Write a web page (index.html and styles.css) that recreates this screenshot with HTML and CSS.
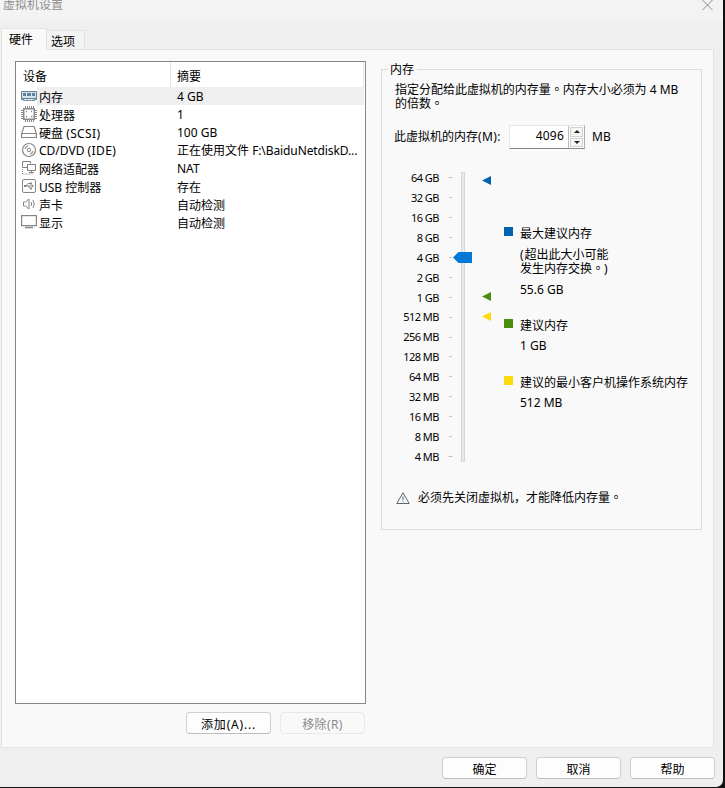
FILE: index.html
```html
<!DOCTYPE html>
<html lang="zh-CN">
<head>
<meta charset="utf-8">
<title>虚拟机设置</title>
<link rel="stylesheet" href="styles.css">
</head>
<body>
<div class="dialog">
  <header class="titlebar">
    <span class="title">虚拟机设置</span>
    <svg class="close" width="11" height="11" viewBox="0 0 11 11"><path d="M.5 0l10 10M10.500 0l-10 10" fill="none" stroke="#8a8a8a"/></svg>
  </header>
  <nav class="tabs">
    <div class="tab active">硬件</div>
    <div class="tab">选项</div>
  </nav>
  <main class="panel">
    <section class="left">
      <div class="list">
        <div class="list-head"><span class="c1">设备</span><span class="c2">摘要</span></div>
        <div class="row selected"><svg class="ico" width="16" height="16" viewBox="0 0 16 16"><path d="M.5 3.500h15v8h-2v1h-11v-1h-2z" fill="#d3e2eb" stroke="#638098"/><path d="M2 5h3v3H2zM6 5h4v3H6zM11 5h3v3h-3z" fill="#638098"/><path d="M1 10.500h14" stroke="#638098"/><path d="M4 12h1M7 12h1M10 12h1" stroke="#fff"/></svg><span class="name">内存</span><span class="sum">4 GB</span></div>
        <div class="row"><svg class="ico" width="16" height="16" viewBox="0 0 16 16" fill="none" stroke="#8b8b8b"><path d="M4.500 0v2M6.500 0v2M8.500 0v2M10.500 0v2M12.500 0v2M4.500 14v2M6.500 14v2M8.500 14v2M10.500 14v2M12.500 14v2M0 4.500h2M0 6.500h2M0 8.500h2M0 10.500h2M0 12.500h2M14 4.500h2M14 6.500h2M14 8.500h2M14 10.500h2M14 12.500h2"/><path d="M2.750 2.750h10.500v10.500H2.750z" stroke-width="1.500"/><path d="M5 5.500h1M10 5.500h1M5 10.500h1M10 10.500h1.500" stroke-width="1.500"/></svg><span class="name">处理器</span><span class="sum">1</span></div>
        <div class="row"><svg class="ico" width="16" height="16" viewBox="0 0 16 16" fill="none" stroke="#878787" stroke-width="1.200"><path d="M3 2.500h10l2.400 7v4H.6v-4zM.5 9.500h15"/></svg><span class="name">硬盘 <span class="wide">(SCSI)</span></span><span class="sum">100 GB</span></div>
        <div class="row"><svg class="ico" width="16" height="16" viewBox="0 0 16 16" fill="none" stroke="#858585"><circle cx="8" cy="8" r="6.500" stroke-width="1.200"/><circle cx="8" cy="8" r="1.700"/><path d="M4 7a4 4 0 0 1 3-3M12 9a4 4 0 0 1-3 3" stroke-width="1.600" stroke="#aaa"/></svg><span class="name latin">CD/DVD <span class="wide">(IDE)</span></span><span class="sum">正在使用文件 <span class="path">F:\BaiduNetdiskD...</span></span></div>
        <div class="row"><svg class="ico" width="16" height="16" viewBox="0 0 16 16" fill="none" stroke="#818181"><path d="M6 7.500H1.500v-6h8v2"/><path d="M6.500 4.500h8v6h-8zM8 12.500h5M10.500 10.500v2"/><path d="M1.500 9v5h10" stroke-dasharray="1 1"/></svg><span class="name">网络适配器</span><span class="sum">NAT</span></div>
        <div class="row"><svg class="ico" width="16" height="16" viewBox="0 0 16 16" fill="none" stroke="#858585"><rect x="1.500" y="1.500" width="13" height="13" rx="1.500"/><path d="M4 8h8M5 8l2-2.500h3M7 8l2 2.500h1.500"/><path d="M3 7h2v2H3zM9 4.500h2v2H9zM9 9.500h2v2H9zM11 6.500L13 8l-2 1.500z" fill="#858585" stroke="none"/></svg><span class="name">USB 控制器</span><span class="sum cjk">存在</span></div>
        <div class="row"><svg class="ico" width="16" height="16" viewBox="0 0 16 16" fill="none" stroke="#858585"><path d="M2.500 6h2L8 3v10L4.500 10h-2z"/><path d="M10 6q1.500 2 0 4M12 4q2.500 4 0 8"/></svg><span class="name cjk">声卡</span><span class="sum cjk">自动检测</span></div>
        <div class="row"><svg class="ico" width="16" height="16" viewBox="0 0 16 16" fill="none" stroke="#858585"><rect x=".6" y="1.600" width="14.800" height="10" stroke-width="1.200"/><path d="M4 13.500h8" stroke-width="1.500"/></svg><span class="name cjk">显示</span><span class="sum cjk">自动检测</span></div>
      </div>
      <div class="list-actions">
        <div class="btn add"><span class="wide">添加(A)...</span></div>
        <div class="btn disabled"><span class="wide">移除(R)</span></div>
      </div>
    </section>
    <fieldset class="group">
      <legend>内存</legend>
      <p class="desc">指定分配给此虚拟机的内存量<span class="stop" lang="zh-TW">。</span>内存大小必须为 4 MB<br>的倍数<span class="stop" lang="zh-TW">。</span></p>
      <div class="amount">
        <label>此虚拟机的内存<span class="wide">(M):</span></label>
        <div class="spin"><span class="value">4096</span><span class="arrows"><i class="up"></i><i class="down"></i></span></div>
        <span>MB</span>
      </div>
      <div class="mem">
        <div class="labels"><span>64 GB</span><span>32 GB</span><span>16 GB</span><span>8 GB</span><span>4 GB</span><span>2 GB</span><span>1 GB</span><span>512 MB</span><span>256 MB</span><span>128 MB</span><span>64 MB</span><span>32 MB</span><span>16 MB</span><span>8 MB</span><span>4 MB</span></div>
        <svg class="slider" width="48" height="292" viewBox="0 0 48 292">
          <path d="M.5 5.500h4M1 25.500h3M1 45.500h3M1 65.500h3M1 85.500h3M1 105.500h3M1 125.500h3M1 145.500h3M1 165.500h3M1 184.500h3M1 204.500h3M1 224.500h3M1 244.500h3M1 264.500h3M.5 284.500h4" stroke="#c2c2c2"/>
          <rect x="13.500" y=".5" width="3" height="289" fill="#e7eaea" stroke="#d6d6d6"/>
          <path d="M5 85.500L10.500 80H24v11H10.500z" fill="#0078d7"/>
          <path d="M34 8.500L43 4v9z" fill="#0063b1"/>
          <path d="M34 124.500l9-4.500v9z" fill="#498f0d"/>
          <path d="M34 144.500l9-4.500v9z" fill="#ffda0b"/>
        </svg>
        <div class="legend">
          <div class="item max"><b></b><div><div>最大建议内存</div><div class="note"><span class="open">(</span>超出此大小可能<br>发生内存交换<span class="stop" lang="zh-TW">。</span>)</div><div class="num">55.6 GB</div></div></div>
          <div class="item rec"><b></b><div><div>建议内存</div><div class="num">1 GB</div></div></div>
          <div class="item min"><b></b><div><div>建议的最小客户机操作系统内存</div><div class="num">512 MB</div></div></div>
        </div>
      </div>
      <div class="warn"><svg width="14" height="12" viewBox="0 0 14 12"><path d="M7 .8L13.200 11.500H.8z" fill="none" stroke="#566573"/><path d="M7 4.500v3.500M7 9v1" stroke="#8793a0" stroke-width="1.500"/></svg><span>必须先关闭虚拟机，才能降低内存量<span class="stop" lang="zh-TW">。</span></span></div>
    </fieldset>
  </main>
  <footer class="footer"><div class="btn">确定</div><div class="btn">取消</div><div class="btn">帮助</div></footer>
</div>
</body>
</html>
```
FILE: styles.css
```css
* { box-sizing: border-box; }
body { margin: 0; width: 725px; height: 788px; overflow: hidden; background: #111; color: #000; font: 12px/18px "Noto Sans", "Noto Sans CJK SC", sans-serif; white-space: nowrap; }
svg { display: block; flex: none; }
.dialog { width: 723px; height: 787px; background: #efefef; border-radius: 0 0 7px 0; overflow: hidden; }
.titlebar { height: 21px; background: #f3f3f3; display: flex; justify-content: space-between; padding: 0 10px 0 3px; color: #8f8f8f; }
.title { line-height: 10px; }
.tabs { display: flex; align-items: flex-end; height: 28px; padding-left: 1px; }
.tab { width: 38px; height: 19px; border: 1px solid #e3e3e3; border-left: 0; border-bottom: 0; background: #f3f3f3; padding-left: 4px; line-height: 21px; }
.tab.active { width: 46px; height: 22px; border-left: 1px solid #e3e3e3; background: #f9f9f9; padding-left: 7px; margin-bottom: -1px; line-height: 22px; z-index: 1; }
.panel { width: 713px; height: 699px; margin-left: 1px; border: 1px solid #e3e3e3; background: #f9f9f9; display: flex; align-items: flex-start; padding: 11px 0 0 13px; }
.left { width: 351px; }
.list { height: 643px; background: #fff; border: 1px solid #828790; }
.list-head { height: 25px; display: flex; line-height: 30px; margin-right: 1px; border-right: 1px solid #e5e5e5; }
.c1 { width: 155px; padding-left: 7px; border-right: 1px solid #e5e5e5; }
.c2 { padding-left: 6px; }
.row { height: 18px; display: flex; align-items: center; padding-left: 5px; margin-right: 1px; line-height: 18px; }
.row.selected { background: linear-gradient(90deg, #fff 21px, #efefef 21px); }
.ico { margin-right: 2px; }
.name { width: 138px; margin-top: 3px; }
.name.latin { margin-top: 1px; }
.sum { margin-top: 2px; }
.cjk { margin-top: 4px; }
.wide { letter-spacing: .4px; }
.path { letter-spacing: -.1px; }
.list-actions { display: flex; justify-content: flex-end; gap: 9px; margin-top: 8px; padding-right: 1px; }
.btn { width: 85px; height: 22px; border: 1px solid #d0d0d0; border-bottom-color: #bdbdbd; border-radius: 4px; background: #fdfdfd; text-align: center; line-height: 23px; }
.add .wide { letter-spacing: .8px; }
.btn.disabled { color: #8a8a8a; background: #f9f9f9; border-color: #e9e9e9; }
.group { width: 321px; height: 469px; margin: 0 0 0 15px; padding: 0; border: 1px solid #dcdcdc; }
.group legend { margin-left: 6px; padding: 0 3px 0 2px; line-height: 17px; height: 16px; }
.stop { font-family: "Noto Sans CJK TC", sans-serif; line-height: 1; }
.desc { margin: 6px 0 0 13px; line-height: 14px; letter-spacing: -.02px; }
.amount { display: flex; margin: 14px 0 0 12px; height: 24px; line-height: 28px; align-items: center; }
.amount label { width: 115px; }
.spin { width: 76px; height: 24px; border: 1px solid #e6e6e6; border-bottom-color: #868686; border-right-color: #aaaab8; background: #fff; display: flex; justify-content: flex-end; margin-right: 7px; }
.value { line-height: 20px; margin-right: 4px; letter-spacing: .2px; }
.arrows { width: 16px; padding: 1px; display: grid; gap: 1px; border-left: 1px solid #bbb; }
.arrows i { border: 1px solid #d0d0d0; background: #f6f6f6; display: grid; place-items: center; }
.arrows i::before { content: ""; border: 3px solid transparent; border-top: 0; border-bottom: 3px solid #222; }
.arrows .down::before { border-top: 3px solid #222; border-bottom: 0; }
.mem { display: flex; height: 292px; margin-top: 23px; }
.labels { width: 57px; display: grid; grid-auto-rows: 19.930px; line-height: 12px; font-size: 11px; letter-spacing: -.5px; text-align: right; height: 292px; }
.slider { margin-left: 9px; }
.legend { margin-left: 8px; padding-top: 53px; }
.item { display: flex; line-height: 18px; gap: 7px; }
.item b { width: 9px; height: 9px; margin-top: 2px; }
.max b { background: #0063b1; } .rec b { background: #498f0d; } .min b { background: #ffda0b; }
.note { line-height: 14px; margin-top: 5px; }
.open { letter-spacing: 1px; }
.num { margin-top: 2px; }
.max .num { margin-top: 5px; }
.rec { margin-top: 18px; } .min { margin-top: 19px; }
.warn { display: flex; align-items: center; gap: 8px; margin: 25px 0 0 14px; height: 18px; }
.footer { display: flex; justify-content: flex-end; gap: 9px; padding: 9px 8px 0 0; }
```
